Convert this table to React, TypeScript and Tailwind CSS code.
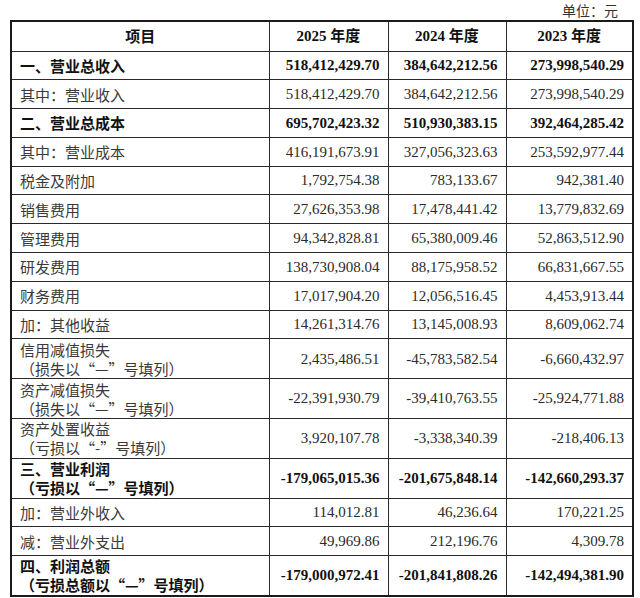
import React from "react";

type Row = {
  label: string[];
  values: [string, string, string];
  bold?: boolean;
};

const rows: Row[] = [
  { label: ["一、营业总收入"], values: ["518,412,429.70", "384,642,212.56", "273,998,540.29"], bold: true },
  { label: ["其中：营业收入"], values: ["518,412,429.70", "384,642,212.56", "273,998,540.29"] },
  { label: ["二、营业总成本"], values: ["695,702,423.32", "510,930,383.15", "392,464,285.42"], bold: true },
  { label: ["其中：营业成本"], values: ["416,191,673.91", "327,056,323.63", "253,592,977.44"] },
  { label: ["税金及附加"], values: ["1,792,754.38", "783,133.67", "942,381.40"] },
  { label: ["销售费用"], values: ["27,626,353.98", "17,478,441.42", "13,779,832.69"] },
  { label: ["管理费用"], values: ["94,342,828.81", "65,380,009.46", "52,863,512.90"] },
  { label: ["研发费用"], values: ["138,730,908.04", "88,175,958.52", "66,831,667.55"] },
  { label: ["财务费用"], values: ["17,017,904.20", "12,056,516.45", "4,453,913.44"] },
  { label: ["加：其他收益"], values: ["14,261,314.76", "13,145,008.93", "8,609,062.74"] },
  { label: ["信用减值损失", "（损失以“—”号填列）"], values: ["2,435,486.51", "-45,783,582.54", "-6,660,432.97"] },
  { label: ["资产减值损失", "（损失以“—”号填列）"], values: ["-22,391,930.79", "-39,410,763.55", "-25,924,771.88"] },
  { label: ["资产处置收益", "（亏损以“-”号填列）"], values: ["3,920,107.78", "-3,338,340.39", "-218,406.13"] },
  { label: ["三、营业利润", "（亏损以“—”号填列）"], values: ["-179,065,015.36", "-201,675,848.14", "-142,660,293.37"], bold: true },
  { label: ["加：营业外收入"], values: ["114,012.81", "46,236.64", "170,221.25"] },
  { label: ["减：营业外支出"], values: ["49,969.86", "212,196.76", "4,309.78"] },
  { label: ["四、利润总额", "（亏损总额以“—”号填列）"], values: ["-179,000,972.41", "-201,841,808.26", "-142,494,381.90"], bold: true },
];

const cjk = "font-['Noto_Sans_CJK_SC',sans-serif]";
const num = "font-['Liberation_Serif','Noto_Sans_CJK_SC',serif]";

export default function App() {
  return (
    <div className="h-[598px] w-[640px] overflow-hidden bg-white pl-[10px]">
      {/* Unit caption */}
      <div className={`flex h-[20px] w-[622px] items-center justify-end pr-[14px] text-[14px] text-[#333] ${cjk}`}>
        单位：元
      </div>

      <table className="w-[622px] table-fixed border-collapse border-2 border-[#1a1a1a] text-[15px]">
        <colgroup>
          <col className="w-[258px]" />
          <col className="w-[119px]" />
          <col className="w-[118px]" />
          <col className="w-[127px]" />
        </colgroup>
        <thead>
          <tr className="h-[30px]">
            <th className={`border border-[#2a2a2a] text-center font-bold text-[#111] ${cjk}`}>项目</th>
            {["2025", "2024", "2023"].map((y) => (
              <th key={y} className={`border border-[#2a2a2a] text-center font-bold text-[#111] ${num}`}>
                {y} 年度
              </th>
            ))}
          </tr>
        </thead>
        <tbody>
          {rows.map((r, i) => {
            const tall = r.label.length > 1;
            return (
              <tr key={i} className={tall ? "h-[39.8px]" : "h-[28.8px]"}>
                <td
                  className={`border border-[#2a2a2a] pl-[8px] align-middle leading-[19px] ${cjk} ${
                    r.bold ? "font-bold text-[#111]" : "text-[#3a3a3a]"
                  }`}
                >
                  {r.label.map((l, j) => (
                    <div key={j}>{l}</div>
                  ))}
                </td>
                {r.values.map((v, j) => (
                  <td
                    key={j}
                    className={`border border-[#2a2a2a] pr-[8px] text-right align-middle ${num} ${
                      r.bold ? "font-bold text-[#111]" : "text-[#2a2a2a]"
                    }`}
                  >
                    {v}
                  </td>
                ))}
              </tr>
            );
          })}
        </tbody>
      </table>
    </div>
  );
}
